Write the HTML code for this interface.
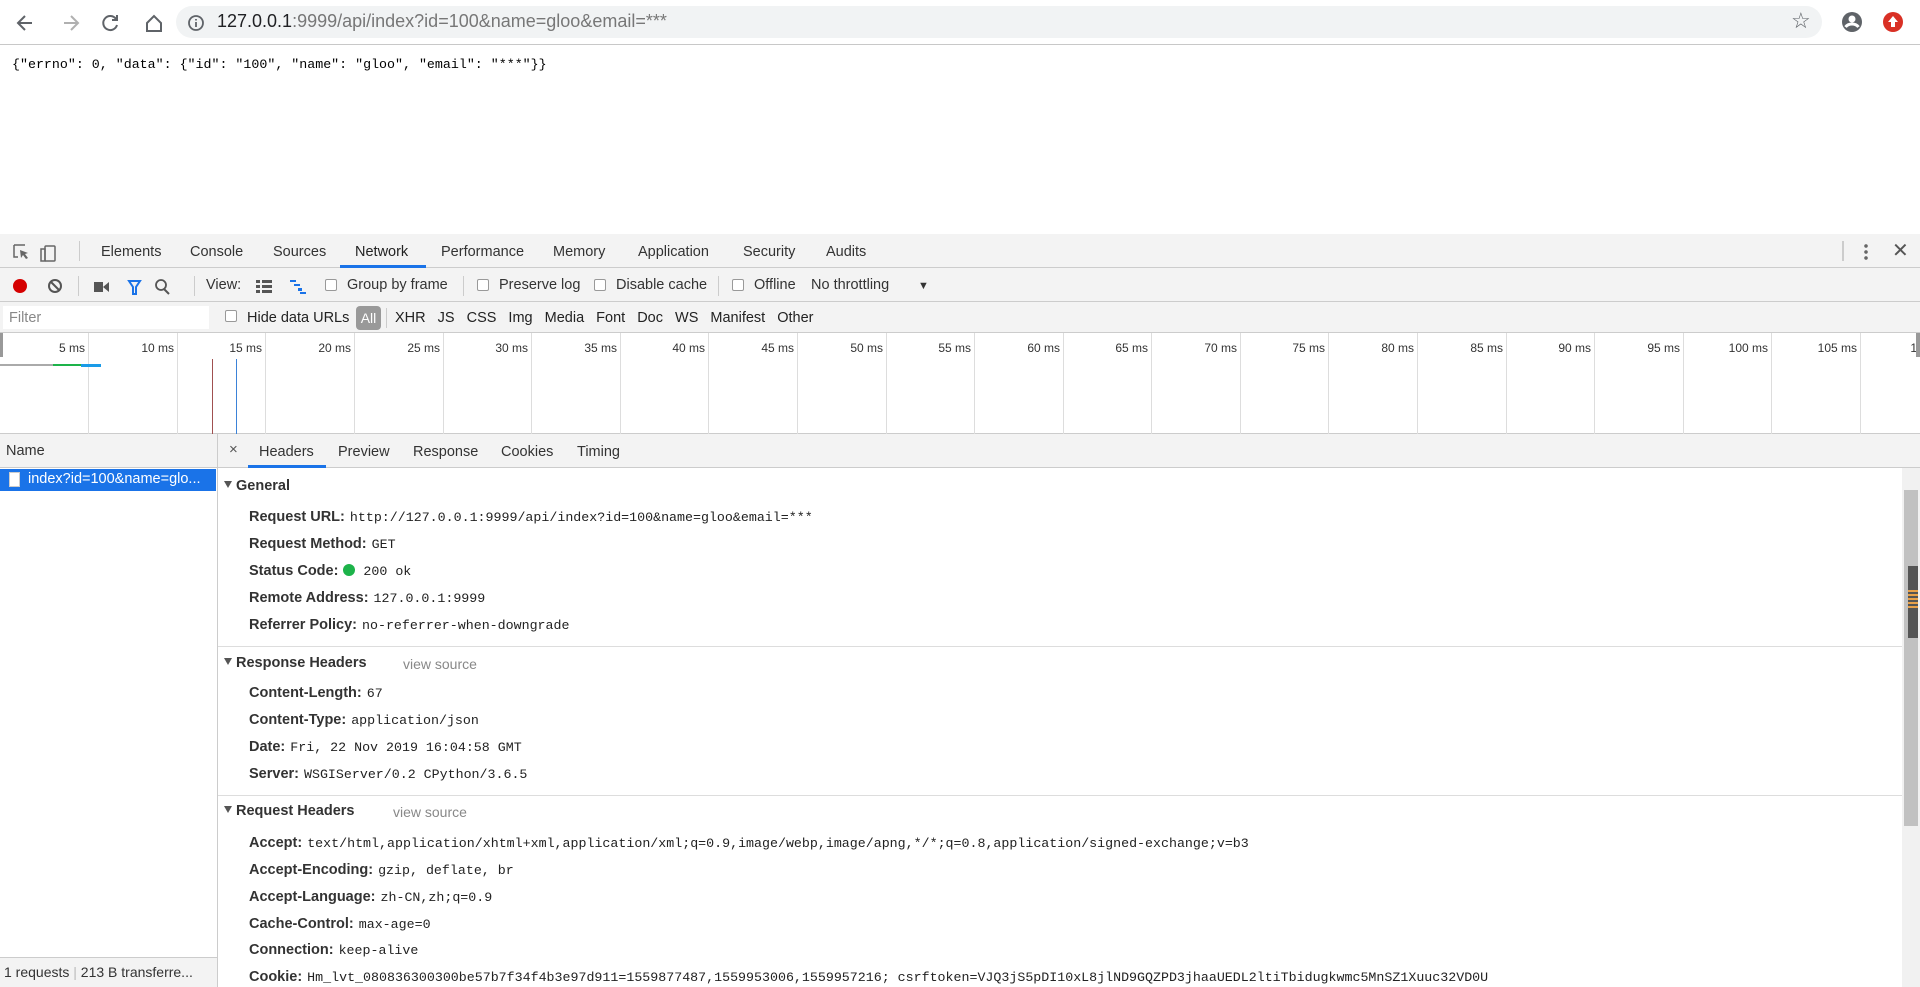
<!DOCTYPE html>
<html><head><meta charset="utf-8"><style>
*{box-sizing:border-box;margin:0;padding:0}
body{width:1920px;height:987px;overflow:hidden;background:#fff;font-family:"Liberation Sans",sans-serif;font-size:14px;color:#333;position:relative}
.abs{position:absolute}
.top{left:0;top:0;width:1920px;height:45px;background:#fff;border-bottom:1px solid #c8c8c8}
.omni{left:176px;top:6px;width:1646px;height:32px;background:#f1f3f4;border-radius:16px}
.url{left:217px;top:11px;font-size:18px;color:#202124;white-space:nowrap}
.url span{color:#777}
.json{left:12px;top:57px;font-family:"Liberation Mono",monospace;font-size:13.3px;color:#000}
.dt{left:0;top:234px;width:1920px;height:753px;background:#f3f3f3;border-top:1px solid #ccc}
.tabs{top:234px;left:0;width:1920px;height:34px;border-bottom:1px solid #ccc;background:#f3f3f3}
.tab{top:244px;font-size:14.5px;color:#333}
.bar2{top:268px;left:0;width:1920px;height:34px;border-bottom:1px solid #ccc}
.t2{font-size:14.5px;color:#333;top:277px}
.cb{width:12px;height:12px;border:1px solid #999;border-radius:2px;background:#fff}
.bar3{top:302px;left:0;width:1920px;height:31px;border-bottom:1px solid #ccc}
.t3{font-size:14.5px;color:#222;top:310px}
.tl{top:333px;left:0;width:1920px;height:101px;background:#fff;border-bottom:1px solid #ccc}
.gl{top:333px;width:1px;height:101px;background:#ddd}
.lb{top:341px;font-size:12px;color:#333;text-align:right;width:60px}
.left{top:434px;left:0;width:218px;height:553px;background:#fff;border-right:1px solid #ccc}
.detail{top:434px;left:218px;width:1684px;height:553px;background:#fff}
.dh{top:434px;left:218px;width:1702px;height:34px;background:#f3f3f3;border-bottom:1px solid #ccc}
.dtab{top:444px;font-size:14.5px;color:#333}
.sec{font-weight:bold;font-size:14.5px;color:#333;left:224px}
.sec:before{content:"";display:inline-block;border-left:4px solid transparent;border-right:4px solid transparent;border-top:7px solid #555;margin-right:4px;vertical-align:2px}
.row{left:249px;font-size:14.5px;white-space:nowrap}
.row b{color:#333;font-weight:bold}
.row span{font-family:"Liberation Mono",monospace;font-size:13.3px;color:#222;margin-left:5px}
.vs{font-size:14px;color:#888}
.sep{left:218px;width:1684px;height:1px;background:#ddd}
</style></head><body>
<div class="abs top"></div>
<svg class="abs" style="left:14px;top:11px" width="150" height="24" viewBox="0 0 150 24" fill="none" stroke-width="2">
<path d="M18 12H5M11 5l-7 7 7 7" stroke="#5f6368"/>
<path d="M50 12h13M57 5l7 7-7 7" stroke="#b0b0b0"/>
<path d="M102 8a7 7 0 1 0 1 6" stroke="#5f6368"/><path d="M103 4v5h-5" stroke="#5f6368"/>
<path d="M133 12l7-7 7 7v8h-14z" stroke="#5f6368"/>
</svg>
<div class="abs omni"></div>
<svg class="abs" style="left:187px;top:14px" width="18" height="18"><circle cx="9" cy="9" r="7" fill="none" stroke="#5f6368" stroke-width="1.8"/><path d="M9 8v5M9 5v1.5" stroke="#5f6368" stroke-width="1.8"/></svg>
<div class="abs url">127.0.0.1<span>:9999/api/index?id=100&amp;name=gloo&amp;email=***</span></div>
<div class="abs" style="left:1791px;top:8px;font-size:22px;color:#5f6368">☆</div>
<svg class="abs" style="left:1841px;top:11px" width="22" height="22"><circle cx="11" cy="11" r="10" fill="#5f6368"/><circle cx="11" cy="8" r="3.5" fill="#fff"/><path d="M4.5 16c3-4 10-4 13 0" stroke="#fff" stroke-width="3" fill="none"/></svg>
<svg class="abs" style="left:1882px;top:11px" width="22" height="22"><circle cx="11" cy="11" r="10" fill="#d93025"/><path d="M11 5l5 6h-3v5h-4v-5H6z" fill="#fff"/></svg>
<div class="abs json">{"errno": 0, "data": {"id": "100", "name": "gloo", "email": "***"}}</div>

<div class="abs dt"></div>
<div class="abs tabs"></div>
<svg class="abs" style="left:12px;top:243px" width="54" height="20" fill="none" stroke="#666" stroke-width="1.5"><path d="M2 2h11M2 2v12h4"/><path d="M8 7l8 3-3 1 3 4-2 1-3-4-2 3z" fill="#666" stroke="none"/><rect x="33" y="3" width="10" height="15" rx="1"/><path d="M29 6h4v12h-4z"/></svg>
<div class="abs" style="left:79px;top:241px;width:1px;height:20px;background:#ccc"></div>
<div class="abs tab" style="left:101px">Elements</div>
<div class="abs tab" style="left:190px">Console</div>
<div class="abs tab" style="left:273px">Sources</div>
<div class="abs tab" style="left:355px;color:#222">Network</div>
<div class="abs" style="left:340px;top:265px;width:86px;height:3px;background:#1a73e8"></div>
<div class="abs tab" style="left:441px">Performance</div>
<div class="abs tab" style="left:553px">Memory</div>
<div class="abs tab" style="left:638px">Application</div>
<div class="abs tab" style="left:743px">Security</div>
<div class="abs tab" style="left:826px">Audits</div>
<div class="abs" style="left:1842px;top:241px;width:2px;height:20px;background:#ccc"></div>
<div class="abs" style="left:1864px;top:243px;width:4px;height:18px;background:radial-gradient(circle,#666 1.6px,transparent 2px) 0 0/4px 6px"></div>
<div class="abs" style="left:1892px;top:238px;font-size:20px;color:#555">✕</div>

<div class="abs bar2"></div>
<div class="abs" style="left:13px;top:279px;width:14px;height:14px;border-radius:50%;background:#d50000"></div>
<svg class="abs" style="left:47px;top:278px" width="16" height="16"><circle cx="8" cy="8" r="6" fill="none" stroke="#555" stroke-width="2"/><path d="M4 4l8 8" stroke="#555" stroke-width="2"/></svg>
<div class="abs" style="left:78px;top:276px;width:1px;height:20px;background:#ccc"></div>
<svg class="abs" style="left:93px;top:279px" width="80" height="16"><path d="M1 3h9v10H1zM10 8l6-5v10z" fill="#555"/><path d="M36 2h11l-4 6v7h-3V8z" fill="none" stroke="#1a73e8" stroke-width="2"/><circle cx="68" cy="6" r="5" fill="none" stroke="#555" stroke-width="1.8"/><path d="M71 10l5 5" stroke="#555" stroke-width="2"/></svg>
<div class="abs" style="left:194px;top:276px;width:1px;height:20px;background:#ccc"></div>
<div class="abs t2" style="left:206px">View:</div>
<svg class="abs" style="left:256px;top:279px" width="56" height="16"><path d="M0 1h4v3H0zM6 1h10v3H6zM0 6h4v3H0zM6 6h10v3H6zM0 11h4v3H0zM6 11h10v3H6z" fill="#555"/><path d="M34 1h6v2h-6zM38 5h6v2h-6zM42 9h4v3h-4zM44 13h6v2h-6z" fill="#1a73e8"/></svg>
<div class="abs cb" style="left:325px;top:279px"></div><div class="abs t2" style="left:347px">Group by frame</div>
<div class="abs" style="left:463px;top:276px;width:1px;height:20px;background:#ccc"></div>
<div class="abs cb" style="left:477px;top:279px"></div><div class="abs t2" style="left:499px">Preserve log</div>
<div class="abs cb" style="left:594px;top:279px"></div><div class="abs t2" style="left:616px">Disable cache</div>
<div class="abs" style="left:718px;top:276px;width:1px;height:20px;background:#ccc"></div>
<div class="abs cb" style="left:732px;top:279px"></div><div class="abs t2" style="left:754px">Offline</div>
<div class="abs t2" style="left:811px">No throttling</div>
<div class="abs t2" style="left:918px;font-size:11px;top:280px">▼</div>

<div class="abs bar3"></div>
<div class="abs" style="left:3px;top:306px;width:206px;height:23px;background:#fff"></div>
<div class="abs t3" style="left:9px;color:#888">Filter</div>
<div class="abs cb" style="left:225px;top:310px"></div><div class="abs t3" style="left:247px">Hide data URLs</div>
<div class="abs" style="left:356px;top:306px;width:25px;height:24px;border-radius:4px;background:#999;color:#fff;font-size:14px;text-align:center;line-height:24px">All</div>
<div class="abs" style="left:386px;top:308px;width:1px;height:20px;background:#ccc"></div>
<div class="abs t3" style="left:395px;word-spacing:8px;white-space:nowrap">XHR JS CSS Img Media Font Doc WS Manifest Other</div>

<div class="abs tl"></div>
<div class="abs" style="left:0;top:333px;width:3px;height:24px;background:#999"></div>
<div class="abs gl" style="left:88px"></div><div class="abs gl" style="left:177px"></div><div class="abs gl" style="left:265px"></div><div class="abs gl" style="left:354px"></div><div class="abs gl" style="left:443px"></div><div class="abs gl" style="left:531px"></div><div class="abs gl" style="left:620px"></div><div class="abs gl" style="left:708px"></div><div class="abs gl" style="left:797px"></div><div class="abs gl" style="left:886px"></div><div class="abs gl" style="left:974px"></div><div class="abs gl" style="left:1063px"></div><div class="abs gl" style="left:1151px"></div><div class="abs gl" style="left:1240px"></div><div class="abs gl" style="left:1328px"></div><div class="abs gl" style="left:1417px"></div><div class="abs gl" style="left:1506px"></div><div class="abs gl" style="left:1594px"></div><div class="abs gl" style="left:1683px"></div><div class="abs gl" style="left:1771px"></div><div class="abs gl" style="left:1860px"></div>
<div class="abs lb" style="left:25px">5 ms</div><div class="abs lb" style="left:114px">10 ms</div><div class="abs lb" style="left:202px">15 ms</div><div class="abs lb" style="left:291px">20 ms</div><div class="abs lb" style="left:380px">25 ms</div><div class="abs lb" style="left:468px">30 ms</div><div class="abs lb" style="left:557px">35 ms</div><div class="abs lb" style="left:645px">40 ms</div><div class="abs lb" style="left:734px">45 ms</div><div class="abs lb" style="left:823px">50 ms</div><div class="abs lb" style="left:911px">55 ms</div><div class="abs lb" style="left:1000px">60 ms</div><div class="abs lb" style="left:1088px">65 ms</div><div class="abs lb" style="left:1177px">70 ms</div><div class="abs lb" style="left:1265px">75 ms</div><div class="abs lb" style="left:1354px">80 ms</div><div class="abs lb" style="left:1443px">85 ms</div><div class="abs lb" style="left:1531px">90 ms</div><div class="abs lb" style="left:1620px">95 ms</div><div class="abs lb" style="left:1708px">100 ms</div><div class="abs lb" style="left:1797px">105 ms</div>
<div class="abs lb" style="left:1857px;text-align:right;width:60px;overflow:hidden">1</div>
<div class="abs" style="left:1916px;top:333px;width:4px;height:24px;background:#999"></div>
<div class="abs" style="left:0;top:364px;width:53px;height:2px;background:#aaa"></div>
<div class="abs" style="left:53px;top:364px;width:28px;height:2px;background:#1db34a"></div>
<div class="abs" style="left:81px;top:364px;width:20px;height:3px;background:#1a9be8"></div>
<div class="abs" style="left:212px;top:359px;width:1px;height:75px;background:#a05050"></div>
<div class="abs" style="left:236px;top:359px;width:1px;height:75px;background:#3b82d8"></div>

<div class="abs left"></div>
<div class="abs" style="left:0;top:434px;width:218px;height:34px;background:#f3f3f3;border-bottom:1px solid #ccc;border-right:1px solid #ccc"></div>
<div class="abs" style="left:6px;top:443px;font-size:14.5px;color:#333">Name</div>
<div class="abs" style="left:0;top:469px;width:216px;height:22px;background:#1a73e8"></div>
<div class="abs" style="left:9px;top:472px;width:11px;height:15px;background:#fff;border:1px solid #ccc"></div>
<div class="abs" style="left:28px;top:471px;font-size:14.5px;color:#fff">index?id=100&amp;name=glo...</div>
<div class="abs" style="left:0;top:957px;width:218px;height:30px;background:#f3f3f3;border-top:1px solid #ccc;border-right:1px solid #ccc"></div>
<div class="abs" style="left:4px;top:964px;font-size:14px;color:#333">1 requests <span style="color:#bbb">|</span> 213 B transferre...</div>

<div class="abs detail"></div>
<div class="abs dh"></div>
<div class="abs dtab" style="left:229px;top:441px;font-size:15px;color:#555">×</div>
<div class="abs dtab" style="left:259px">Headers</div>
<div class="abs" style="left:248px;top:465px;width:78px;height:3px;background:#1a73e8"></div>
<div class="abs dtab" style="left:338px">Preview</div>
<div class="abs dtab" style="left:413px">Response</div>
<div class="abs dtab" style="left:501px">Cookies</div>
<div class="abs dtab" style="left:577px">Timing</div>
<div class="abs" style="left:1902px;top:468px;width:18px;height:519px;background:#f1f1f1"></div>
<div class="abs" style="left:1904px;top:490px;width:14px;height:336px;background:#c1c1c1"></div>
<div class="abs" style="left:1908px;top:566px;width:10px;height:72px;background:#555"></div>
<div class="abs" style="left:1908px;top:590px;width:10px;height:20px;background:repeating-linear-gradient(#e8a14a 0 2px,#555 2px 4px)"></div>

<div class="abs sec" style="top:478px">General</div>
<div class="abs row" style="top:509px"><b>Request URL:</b><span>http://127.0.0.1:9999/api/index?id=100&amp;name=gloo&amp;email=***</span></div>
<div class="abs row" style="top:536px"><b>Request Method:</b><span>GET</span></div>
<div class="abs row" style="top:563px"><b>Status Code:</b><span><i style="display:inline-block;width:12px;height:12px;border-radius:50%;background:#1db34a;vertical-align:-1px"></i> 200 ok</span></div>
<div class="abs row" style="top:590px"><b>Remote Address:</b><span>127.0.0.1:9999</span></div>
<div class="abs row" style="top:617px"><b>Referrer Policy:</b><span>no-referrer-when-downgrade</span></div>
<div class="abs sep" style="top:646px"></div>
<div class="abs sec" style="top:655px">Response Headers</div><div class="abs vs" style="left:403px;top:656px">view source</div>
<div class="abs row" style="top:685px"><b>Content-Length:</b><span>67</span></div>
<div class="abs row" style="top:712px"><b>Content-Type:</b><span>application/json</span></div>
<div class="abs row" style="top:739px"><b>Date:</b><span>Fri, 22 Nov 2019 16:04:58 GMT</span></div>
<div class="abs row" style="top:766px"><b>Server:</b><span>WSGIServer/0.2 CPython/3.6.5</span></div>
<div class="abs sep" style="top:795px"></div>
<div class="abs sec" style="top:803px">Request Headers</div><div class="abs vs" style="left:393px;top:804px">view source</div>
<div class="abs row" style="top:835px"><b>Accept:</b><span>text/html,application/xhtml+xml,application/xml;q=0.9,image/webp,image/apng,*/*;q=0.8,application/signed-exchange;v=b3</span></div>
<div class="abs row" style="top:862px"><b>Accept-Encoding:</b><span>gzip, deflate, br</span></div>
<div class="abs row" style="top:889px"><b>Accept-Language:</b><span>zh-CN,zh;q=0.9</span></div>
<div class="abs row" style="top:916px"><b>Cache-Control:</b><span>max-age=0</span></div>
<div class="abs row" style="top:942px"><b>Connection:</b><span>keep-alive</span></div>
<div class="abs row" style="top:969px"><b>Cookie:</b><span>Hm_lvt_080836300300be57b7f34f4b3e97d911=1559877487,1559953006,1559957216; csrftoken=VJQ3jS5pDI10xL8jlND9GQZPD3jhaaUEDL2ltiTbidugkwmc5MnSZ1Xuuc32VD0U</span></div>
</body></html>
